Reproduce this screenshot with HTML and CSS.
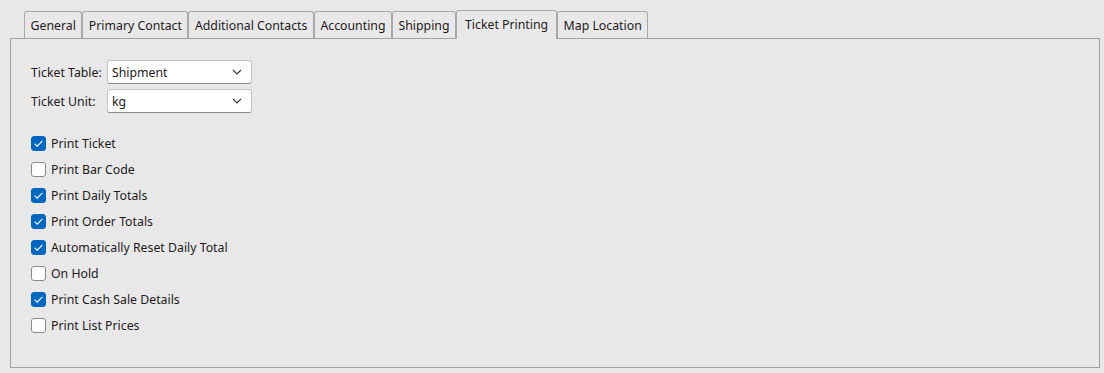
FILE: index.html
```html
<!DOCTYPE html>
<html lang="en">
  <head>
    <meta charset="UTF-8" />
    <title>Customer - Ticket Printing</title>
    <link rel="stylesheet" href="styles.css">
  </head>
  <body>
    <div class="window">
      <ul class="tabs">
        <li class="tab">General</li>
        <li class="tab">Primary Contact</li>
        <li class="tab">Additional Contacts</li>
        <li class="tab">Accounting</li>
        <li class="tab">Shipping</li>
        <li class="tab active">Ticket Printing</li>
        <li class="tab">Map Location</li>
      </ul>

      <div class="panel">
        <div class="field">
          <label>Ticket Table:</label>
          <div class="select">
            <span>Shipment</span>
            <svg width="10" height="6" viewBox="0 0 10 6"><path d="M1 1 L5 5 L9 1" fill="none" stroke="#333" stroke-width="1.1"/></svg>
          </div>
        </div>
        <div class="field">
          <label>Ticket Unit:</label>
          <div class="select">
            <span>kg</span>
            <svg width="10" height="6" viewBox="0 0 10 6"><path d="M1 1 L5 5 L9 1" fill="none" stroke="#333" stroke-width="1.1"/></svg>
          </div>
        </div>

        <div class="checks">
          <div class="check"><span class="box on"><svg width="15" height="15" viewBox="0 0 15 15"><path d="M3.6 7.6 L6.2 10.2 L11.4 4.8" fill="none" stroke="#fff" stroke-width="1.1"/></svg></span>Print Ticket</div>
          <div class="check"><span class="box"></span>Print Bar Code</div>
          <div class="check"><span class="box on"><svg width="15" height="15" viewBox="0 0 15 15"><path d="M3.6 7.6 L6.2 10.2 L11.4 4.8" fill="none" stroke="#fff" stroke-width="1.1"/></svg></span>Print Daily Totals</div>
          <div class="check"><span class="box on"><svg width="15" height="15" viewBox="0 0 15 15"><path d="M3.6 7.6 L6.2 10.2 L11.4 4.8" fill="none" stroke="#fff" stroke-width="1.1"/></svg></span>Print Order Totals</div>
          <div class="check"><span class="box on"><svg width="15" height="15" viewBox="0 0 15 15"><path d="M3.6 7.6 L6.2 10.2 L11.4 4.8" fill="none" stroke="#fff" stroke-width="1.1"/></svg></span>Automatically Reset Daily Total</div>
          <div class="check"><span class="box"></span>On Hold</div>
          <div class="check"><span class="box on"><svg width="15" height="15" viewBox="0 0 15 15"><path d="M3.6 7.6 L6.2 10.2 L11.4 4.8" fill="none" stroke="#fff" stroke-width="1.1"/></svg></span>Print Cash Sale Details</div>
          <div class="check"><span class="box"></span>Print List Prices</div>
        </div>
      </div>
    </div>
  </body>
</html>
```

FILE: styles.css
```css
* {
  margin: 0;
  padding: 0;
  box-sizing: border-box;
}

body {
  background-color: #e8e8e8;
  font-family: "Noto Sans", "Open Sans", sans-serif;
  font-size: 12.3px;
  color: #1e1a1c;
}

.window {
  padding: 10px 5px 5px 10px;
}

.tabs {
  list-style: none;
  display: flex;
  align-items: flex-end;
  padding-left: 14px;
  height: 28px;
}

.tab {
  height: 27px;
  line-height: 28px;
  padding: 0 5.5px;
  border: 1px solid #a8a8a8;
  border-bottom: none;
  border-radius: 3px 3px 0 0;
  white-space: nowrap;
}

.tab.active {
  height: 29px;
  line-height: 28px;
  padding: 0 8px;
  position: relative;
  z-index: 1;
  margin-bottom: -1px;
  background-color: #e8e8e8;
}

.panel {
  border: 1px solid #a0a0a0;
  height: 330px;
  width: 1090px;
  padding: 21px 20px 0 20px;
}

.field {
  display: flex;
  align-items: center;
  height: 24px;
  margin-bottom: 5px;
}

.field label {
  width: 76px;
}

.select {
  width: 145px;
  height: 24px;
  background-color: #fff;
  border: 1px solid #c4c4c4;
  border-bottom-color: #8a8a8a;
  border-radius: 3px;
  display: flex;
  align-items: center;
  justify-content: space-between;
  padding: 0 9px 0 4px;
}

.checks {
  margin-top: 17px;
}

.check {
  display: flex;
  align-items: center;
  height: 26px;
}

.box {
  width: 15px;
  height: 15px;
  border: 1px solid #8a8a8a;
  border-radius: 3px;
  background-color: #fff;
  margin-right: 5px;
  display: flex;
}

.box.on {
  background-color: #0067c0;
  border-color: #0067c0;
}

.box.on svg {
  margin: -1px;
}
```
